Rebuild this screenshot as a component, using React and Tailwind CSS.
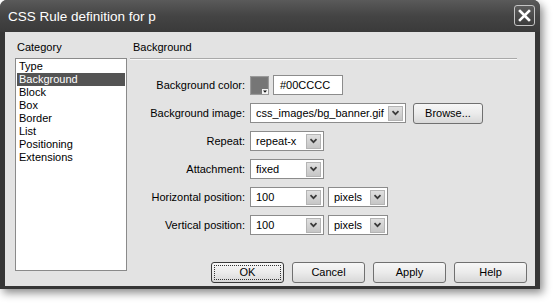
import React from "react";

// Category list on the left side of the dialog
const CATEGORIES = [
  "Type",
  "Background",
  "Block",
  "Box",
  "Border",
  "List",
  "Positioning",
  "Extensions",
];

const Chevron = () => (
  <div className="flex h-[15px] w-[15px] items-center justify-center border border-[#b4b4b4] bg-linear-to-b from-[#e0e0e0] to-[#c6c6c6]">
    <svg width="9" height="6" viewBox="0 0 9 6">
      <path d="M1.5 1.2 L4.5 4.2 L7.5 1.2" fill="none" stroke="#3a3a3a" strokeWidth="1.7" />
    </svg>
  </div>
);

const Select = ({ value, className }) => (
  <div
    className={`flex h-[20px] items-center border border-[#8c8c8c] bg-white pl-[5px] pr-[2px] ${className}`}
  >
    <span className="flex-1 truncate leading-[13px]">{value}</span>
    <Chevron />
  </div>
);

const Button = ({ children, primary }) => (
  <div
    className={`flex h-[21px] w-[73px] items-center justify-center rounded-[3px] border bg-linear-to-b from-[#f7f7f7] via-[#ebebeb] to-[#d8d8d8] leading-[13px] ${
      primary
        ? "border-[#3a3a3a] outline-1 outline-dotted -outline-offset-4 outline-[#333]"
        : "border-[#707070]"
    }`}
  >
    {children}
  </div>
);

const Row = ({ label, children }) => (
  <div className="flex h-[20px] items-center">
    <div className="w-[116px] pr-[1px] text-right leading-[13px]">{label}</div>
    <div className="ml-[4px] flex items-center">{children}</div>
  </div>
);

const ColorSwatch = () => (
  <svg width="19" height="19" viewBox="0 0 19 19">
    <rect x="0.5" y="0.5" width="18" height="18" fill="#7a7a7a" stroke="#9a9a9a" />
    <rect x="2" y="2" width="15" height="15" fill="#767676" />
    <rect x="12" y="13" width="6" height="5" fill="#f4f4f4" />
    <path d="M13 14.5 L17 14.5 L15 16.8 Z" fill="#111" />
  </svg>
);

export default function App() {
  return (
    <div className="h-[304px] w-[555px] bg-white font-['Liberation_Sans',Arial,sans-serif] text-[11px] text-black">
      <div className="flex h-[289px] w-[540px] flex-col rounded-t-[7px] bg-[#363636] shadow-[3px_4px_9px_rgba(0,0,0,0.45)]">
        {/* Title bar */}
        <div className="flex h-[32px] items-start justify-between rounded-t-[7px] bg-linear-to-b from-[#5a5a5a] via-[#444444] to-[#3a3a3a] pl-[8px] pr-[5px]">
          <div className="mt-[9px] text-[13.5px] leading-[16px] text-white">
            CSS Rule definition for p
          </div>
          <div className="mt-[5px] flex h-[21px] w-[21px] items-center justify-center rounded-[3px] border border-[#c4c4c4] bg-linear-to-b from-[#5c5c5c] to-[#3c3c3c]">
            <svg width="13" height="13" viewBox="0 0 13 13">
              <path d="M2 2 L11 11 M11 2 L2 11" stroke="#fff" strokeWidth="2.6" strokeLinecap="square" />
            </svg>
          </div>
        </div>

        {/* Dialog body */}
        <div className="mx-[5px] mb-[3px] flex flex-1 bg-[#e3e3e3] pb-[3px] pl-[10px] pr-[8px] pt-[9px]">
          <div className="flex w-[112px] flex-col">
            <div className="mb-[4px] h-[13px] pl-[2px] leading-[13px]">Category</div>
            <div className="h-[213px] border border-[#8a8a8a] bg-white pt-[1px]">
              {CATEGORIES.map((name) => (
                <div
                  key={name}
                  className={`mx-[1px] h-[13px] pl-[2px] leading-[13px] ${
                    name === "Background" ? "bg-[#545454] text-white" : ""
                  }`}
                >
                  {name}
                </div>
              ))}
            </div>
          </div>

          <div className="ml-[3px] flex flex-1 flex-col">
            <div className="mr-[10px] h-[18px] border-b border-[#a9a9a9] pl-[3px] leading-[13px] shadow-[0_1px_0_#f8f8f8]">
              Background
            </div>

            <div className="mt-[16px] flex flex-col gap-[8px]">
              <Row label="Background color:">
                <ColorSwatch />
                <div className="ml-[4px] flex h-[20px] w-[70px] items-center border border-[#8c8c8c] bg-white pl-[6px] leading-[13px]">
                  #00CCCC
                </div>
              </Row>
              <Row label="Background image:">
                <Select value="css_images/bg_banner.gif" className="w-[156px]" />
                <div className="ml-[7px]">
                  <div className="flex h-[21px] w-[70px] items-center justify-center rounded-[3px] border border-[#707070] bg-linear-to-b from-[#f7f7f7] via-[#ebebeb] to-[#d8d8d8] leading-[13px]">
                    Browse...
                  </div>
                </div>
              </Row>
              <Row label="Repeat:">
                <Select value="repeat-x" className="w-[74px]" />
              </Row>
              <Row label="Attachment:">
                <Select value="fixed" className="w-[74px]" />
              </Row>
              <Row label="Horizontal position:">
                <Select value="100" className="w-[74px]" />
                <Select value="pixels" className="ml-[4px] w-[60px]" />
              </Row>
              <Row label="Vertical position:">
                <Select value="100" className="w-[74px]" />
                <Select value="pixels" className="ml-[4px] w-[60px]" />
              </Row>
            </div>

            <div className="mt-auto flex justify-end gap-[8px]">
              <Button primary>OK</Button>
              <Button>Cancel</Button>
              <Button>Apply</Button>
              <Button>Help</Button>
            </div>
          </div>
        </div>
      </div>
    </div>
  );
}
